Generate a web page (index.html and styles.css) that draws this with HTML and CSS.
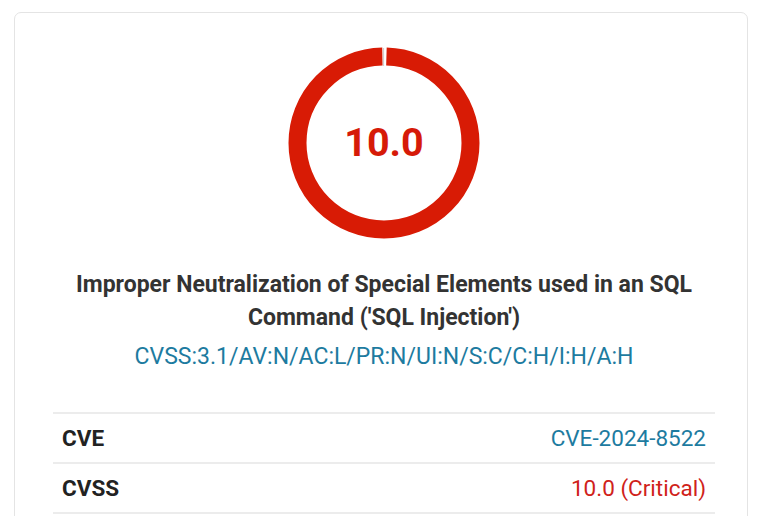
FILE: index.html
```html
<!DOCTYPE html>
<html>
<head>
<meta charset="utf-8">
<link rel="stylesheet" href="styles.css">
</head>
<body>
<div class="card">
  <div class="gauge">
    <svg width="192" height="192" viewBox="0 0 192 192">
      <circle cx="96" cy="96" r="86.5" fill="none" stroke="#d81b05" stroke-width="18" stroke-dasharray="538.5 5" stroke-dashoffset="-2.5" transform="rotate(-90 96 96)"/>
      <line x1="95.5" y1="1" x2="95.5" y2="19" stroke="#d0d0d0" stroke-width="1.2"/>
    </svg>
    <div class="score">10.0</div>
  </div>
  <h2 class="title">Improper Neutralization of Special Elements used in an SQL Command ('SQL Injection')</h2>
  <a class="vector" href="#">CVSS:3.1/AV:N/AC:L/PR:N/UI:N/S:C/C:H/I:H/A:H</a>
  <table class="info">
    <tr><th>CVE</th><td><a href="#">CVE-2024-8522</a></td></tr>
    <tr><th>CVSS</th><td class="crit">10.0 (Critical)</td></tr>
  </table>
</div>
</body>
</html>
```
FILE: styles.css
```css
html, body {
  margin: 0;
  padding: 0;
  background: #fff;
  font-family: Roboto, "Liberation Sans", sans-serif;
}
.card {
  margin: 12px 0 0 14px;
  width: 734px;
  box-sizing: border-box;
  border: 1px solid #e4e4e4;
  border-radius: 7px;
  padding: 34px 32px 40px 38px;
  display: flex;
  flex-direction: column;
  align-items: center;
}
.gauge {
  position: relative;
  width: 192px;
  height: 192px;
}
.gauge svg {
  display: block;
}
.score {
  position: absolute;
  inset: 0;
  display: flex;
  align-items: center;
  justify-content: center;
  font-size: 39.5px;
  font-weight: 700;
  color: #d61a08;
  padding-bottom: 2px;
}
.title {
  margin: 29px 0 0;
  font-size: 23px;
  font-weight: 700;
  line-height: 33px;
  color: #333;
  text-align: center;
  max-width: 640px;
}
.vector {
  margin-top: 8px;
  font-size: 23px;
  line-height: 30px;
  color: #1d7ba0;
  text-decoration: none;
}
.info {
  margin-top: 40px;
  width: 100%;
  border-collapse: collapse;
  font-size: 22.5px;
}
.info tr {
  border-top: 2px solid #ececec;
  border-bottom: 2px solid #ececec;
}
.info th {
  text-align: left;
  font-weight: 700;
  color: #222;
  padding: 11px 9px;
  height: 26px;
}
.info td {
  text-align: right;
  padding: 11px 9px;
}
.info td a {
  color: #1d7ba0;
  text-decoration: none;
}
.info td.crit {
  color: #d0221a;
}
```
